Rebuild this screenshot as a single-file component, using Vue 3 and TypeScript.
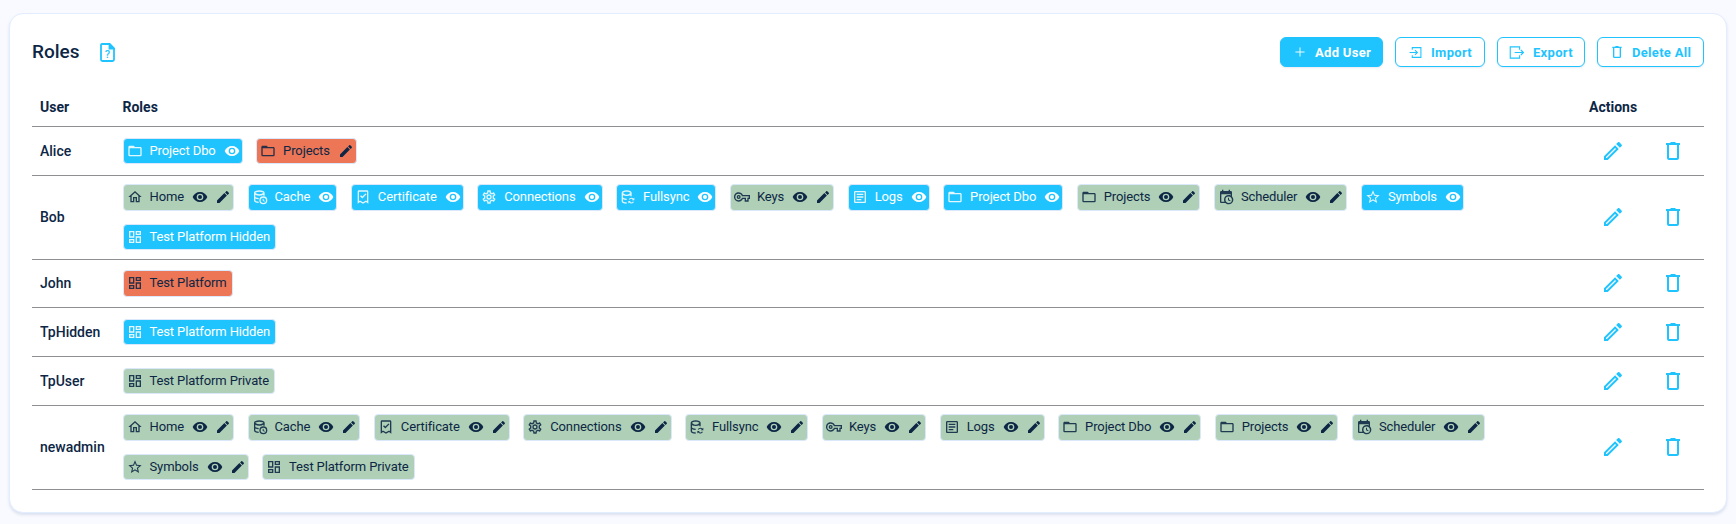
<script setup lang="ts">
const P: Record<string, string> = {
  eye: 'M12,9A3,3 0 0,0 9,12A3,3 0 0,0 12,15A3,3 0 0,0 15,12A3,3 0 0,0 12,9M12,17A5,5 0 0,1 7,12A5,5 0 0,1 12,7A5,5 0 0,1 17,12A5,5 0 0,1 12,17M12,4.5C7,4.5 2.73,7.61 1,12C2.73,16.39 7,19.5 12,19.5C17,19.5 21.27,16.39 23,12C21.27,7.61 17,4.5 12,4.5Z',
  pencil: 'M20.71,7.04C21.1,6.65 21.1,6 20.71,5.63L18.37,3.29C18,2.9 17.35,2.9 16.96,3.29L15.12,5.12L18.87,8.87M3,17.25V21H6.75L17.81,9.93L14.06,6.18L3,17.25Z',
  pencilOutline: 'M14.06,9L15,9.94L5.92,19H5V18.08L14.06,9M17.66,3C17.41,3 17.15,3.1 16.96,3.29L15.13,5.12L18.88,8.87L20.71,7.04C21.1,6.65 21.1,6 20.71,5.63L18.37,3.29C18.17,3.09 17.92,3 17.66,3M14.06,6.19L3,17.25V21H6.75L17.81,9.94L14.06,6.19Z',
  trash: 'M9.5,3V4H5V6H6V19A2,2 0 0,0 8,21H16A2,2 0 0,0 18,19V6H19V4H14.5V3H9.5M8,6H16V19H8V6Z',
  folder: 'M20,18H4V8H20M20,6H12L10,4H4C2.89,4 2,4.89 2,6V18A2,2 0 0,0 4,20H20A2,2 0 0,0 22,18V8C22,6.89 21.1,6 20,6Z',
  home: 'M12 5.69L17 10.19V18H15V12H9V18H7V10.19L12 5.69M12 3L2 12H5V20H11V14H13V20H19V12H22Z',
  grid: 'M19,5V7H15V5H19M9,5V11H5V5H9M19,13V19H15V13H19M9,17V19H5V17H9M21,3H13V9H21V3M11,3H3V13H11V3M21,11H13V21H21V11M11,15H3V21H11V15Z',
  star: 'M12,15.39L8.24,17.66L9.23,13.38L5.91,10.5L10.29,10.13L12,6.09L13.71,10.13L18.09,10.5L14.77,13.38L15.76,17.66M22,9.24L14.81,8.63L12,2L9.19,8.63L2,9.24L7.45,13.97L5.82,21L12,17.27L18.18,21L16.54,13.97L22,9.24Z',
  cog: 'M12,8A4,4 0 0,1 16,12A4,4 0 0,1 12,16A4,4 0 0,1 8,12A4,4 0 0,1 12,8M12,10A2,2 0 0,0 10,12A2,2 0 0,0 12,14A2,2 0 0,0 14,12A2,2 0 0,0 12,10M10,22C9.75,22 9.54,21.82 9.5,21.58L9.13,18.93C8.5,18.68 7.96,18.34 7.44,17.94L4.95,18.95C4.73,19.03 4.46,18.95 4.34,18.73L2.34,15.27C2.21,15.05 2.27,14.78 2.46,14.63L4.57,12.97L4.5,12L4.57,11L2.46,9.37C2.27,9.22 2.21,8.95 2.34,8.73L4.34,5.27C4.46,5.05 4.73,4.96 4.95,5.05L7.44,6.05C7.96,5.66 8.5,5.32 9.13,5.07L9.5,2.42C9.54,2.18 9.75,2 10,2H14C14.25,2 14.46,2.18 14.5,2.42L14.87,5.07C15.5,5.32 16.04,5.66 16.56,6.05L19.05,5.05C19.27,4.96 19.54,5.05 19.66,5.27L21.66,8.73C21.79,8.95 21.73,9.22 21.54,9.37L19.43,11L19.5,12L19.43,13L21.54,14.63C21.73,14.78 21.79,15.05 21.66,15.27L19.66,18.73C19.54,18.95 19.27,19.04 19.05,18.95L16.56,17.95C16.04,18.34 15.5,18.68 14.87,18.93L14.5,21.58C14.46,21.82 14.25,22 14,22H10M11.25,4L10.88,6.61C9.68,6.86 8.62,7.5 7.85,8.39L5.44,7.35L4.69,8.65L6.8,10.2C6.4,11.37 6.4,12.64 6.8,13.8L4.68,15.36L5.43,16.66L7.86,15.62C8.63,16.5 9.68,17.14 10.87,17.38L11.24,20H12.76L13.13,17.39C14.32,17.14 15.37,16.5 16.14,15.62L18.57,16.66L19.32,15.36L17.2,13.81C17.6,12.64 17.6,11.37 17.2,10.2L19.31,8.65L18.56,7.35L16.15,8.39C15.38,7.5 14.32,6.86 13.12,6.62L12.75,4H11.25Z',
  key: 'M22,19H16V15H13.32C12.18,17.42 9.72,19 7,19C3.14,19 0,15.86 0,12C0,8.14 3.14,5 7,5C9.72,5 12.17,6.58 13.32,9H24V15H22V19M18,17H20V13H22V11H11.94L11.71,10.33C11,8.34 9.11,7 7,7A5,5 0 0,0 2,12A5,5 0 0,0 7,17C9.11,17 11,15.66 11.71,13.67L11.94,13H18V17M7,15A3,3 0 0,1 4,12A3,3 0 0,1 7,9A3,3 0 0,1 10,12A3,3 0 0,1 7,15M7,11A1,1 0 0,0 6,12A1,1 0 0,0 7,13A1,1 0 0,0 8,12A1,1 0 0,0 7,11Z',
  logs: 'M5,3C3.89,3 3,3.89 3,5V19C3,20.11 3.89,21 5,21H19C20.11,21 21,20.11 21,19V5C21,3.89 20.11,3 19,3H5M5,5H19V19H5V5M7,7V9H17V7H7M7,11V13H17V11H7M7,15V17H14V15H7Z',
  sched: 'M15,13H16.5V15.82L18.94,17.23L18.19,18.53L15,16.69V13M19,8H5V19H9.67C9.24,18.09 9,17.07 9,16A7,7 0 0,1 16,9C17.07,9 18.09,9.24 19,9.67V8M5,21C3.89,21 3,20.1 3,19V5C3,3.89 3.89,3 5,3H6V1H8V3H16V1H18V3H19A2,2 0 0,1 21,5V11.1C22.24,12.36 23,14.09 23,16A7,7 0 0,1 16,23C14.09,23 12.36,22.24 11.1,21H5M16,11.15A4.85,4.85 0 0,0 11.15,16C11.15,18.68 13.32,20.85 16,20.85A4.85,4.85 0 0,0 20.85,16C20.85,13.32 18.68,11.15 16,11.15Z',
  cert: 'M6,2H18A2,2 0 0,1 20,4V22L16.5,19.5L12,22L7.5,19.5L4,22V4A2,2 0 0,1 6,2M6,4V18.2L7.4,17.2L12,19.7L16.6,17.2L18,18.2V4H6M15.8,6.6L17.2,8L11,14.2L7.6,10.8L9,9.4L11,11.4L15.8,6.6Z',
  cache: 'M11,2C6.6,2 3,3.6 3,5.8V17.2C3,19.2 6,20.7 10,21V19C6.9,18.8 5,17.8 5,17.2V14.3C6.3,15 8,15.4 10,15.5V13.5C7,13.3 5,12.3 5,11.6V8.7C6.5,9.5 8.6,10 11,10C13.4,10 15.5,9.5 17,8.7V10H19V5.8C19,3.6 15.4,2 11,2M11,4C14.9,4 17,5.3 17,5.8C17,6.3 14.9,8 11,8C7.1,8 5,6.3 5,5.8C5,5.3 7.1,4 11,4M17,11A6,6 0 0,0 11,17A6,6 0 0,0 17,23A6,6 0 0,0 23,17A6,6 0 0,0 17,11M17,13A4,4 0 0,1 21,17A4,4 0 0,1 17,21A4,4 0 0,1 13,17A4,4 0 0,1 17,13M16,14.5V17.5L18.6,19L19.3,17.9L17.4,16.8V14.5H16Z',
  sync: 'M10,2C5.8,2 2.5,3.6 2.5,5.8V18.2C2.5,20.3 5.6,21.8 10,22V20C6.4,19.8 4.5,18.8 4.5,18.2V15.2C5.9,16 7.8,16.4 10,16.5V14.5C6.9,14.3 4.5,13.4 4.5,12.4V9.5C6,10.2 7.9,10.6 10,10.6C12.1,10.6 14,10.2 15.5,9.5V11H17.5V5.8C17.5,3.6 14.2,2 10,2M10,4C13.3,4 15.5,5.1 15.5,5.8C15.5,6.5 13.3,8.6 10,8.6C6.7,8.6 4.5,6.5 4.5,5.8C4.5,5.1 6.7,4 10,4M17,13A4.5,4.5 0 0,0 13.1,15.3L14.5,16.1A3,3 0 0,1 17,14.6A3,3 0 0,1 19.1,15.5L17.8,16.8H21.5V13.1L20.2,14.4A4.5,4.5 0 0,0 17,13M12.5,18V21.7L13.8,20.4A4.5,4.5 0 0,0 20.9,19.5L19.5,18.7A3,3 0 0,1 17,20.2A3,3 0 0,1 14.9,19.3L16.2,18H12.5Z',
}

type Perm = 'view' | 'edit' | 'both' | 'hidden' | 'public' | 'private'
type Chip = { name: string; icon: string; perm: Perm }
const c = (name: string, icon: string, perm: Perm): Chip => ({ name, icon, perm })
const all = (n: string, i: string) => c(n, i, 'both')

const users: { name: string; chips: Chip[] }[] = [
  { name: 'Alice', chips: [c('Project Dbo', 'folder', 'view'), c('Projects', 'folder', 'edit')] },
  {
    name: 'Bob',
    chips: [
      all('Home', 'home'), c('Cache', 'cache', 'view'), c('Certificate', 'cert', 'view'), c('Connections', 'cog', 'view'),
      c('Fullsync', 'sync', 'view'), all('Keys', 'key'), c('Logs', 'logs', 'view'), c('Project Dbo', 'folder', 'view'),
      all('Projects', 'folder'), all('Scheduler', 'sched'), c('Symbols', 'star', 'view'), c('Test Platform Hidden', 'grid', 'hidden'),
    ],
  },
  { name: 'John', chips: [c('Test Platform', 'grid', 'public')] },
  { name: 'TpHidden', chips: [c('Test Platform Hidden', 'grid', 'hidden')] },
  { name: 'TpUser', chips: [c('Test Platform Private', 'grid', 'private')] },
  {
    name: 'newadmin',
    chips: [
      all('Home', 'home'), all('Cache', 'cache'), all('Certificate', 'cert'), all('Connections', 'cog'),
      all('Fullsync', 'sync'), all('Keys', 'key'), all('Logs', 'logs'), all('Project Dbo', 'folder'),
      all('Projects', 'folder'), all('Scheduler', 'sched'), all('Symbols', 'star'), c('Test Platform Private', 'grid', 'private'),
    ],
  },
]

const tone = (p: Perm) => (p === 'both' || p === 'private' ? 'green' : p === 'edit' || p === 'public' ? 'red' : 'blue')
const showEye = (p: Perm) => p === 'view' || p === 'both'
const showPen = (p: Perm) => p === 'edit' || p === 'both'
</script>

<template>
  <div class="page">
    <section class="card">
      <header class="head">
        <div class="title-wrap">
          <h1 class="title">Roles</h1>
          <svg class="doc" viewBox="0 0 15 19" width="15" height="19" fill="none" stroke="#1fc4ff" stroke-width="1.8">
            <path d="M2 1H9.5L14 5.5V16.6A1.4 1.4 0 0 1 12.6 18H2.4A1.4 1.4 0 0 1 1 16.6V2A1 1 0 0 1 2 1Z" />
            <path d="M9.5 1V5.5H14Z" fill="#1fc4ff" />
            <text x="7.5" y="15" text-anchor="middle" class="doc-q">?</text>
          </svg>
        </div>
        <div class="btns">
          <button class="btn solid">
            <svg viewBox="0 0 24 24" width="10" height="10" stroke="#fff" stroke-width="2.2" fill="none"><path d="M12 1V23M1 12H23" /></svg>
            Add User
          </button>
          <button class="btn import">
            <svg viewBox="0 0 24 24" width="13" height="13" stroke="#1fc4ff" stroke-width="2" fill="none"><path d="M1 12H15M11 7.5L15.5 12L11 16.5M6 7V3H22V21H6V17" /></svg>
            Import
          </button>
          <button class="btn export">
            <svg viewBox="0 0 24 24" width="15" height="15" stroke="#1fc4ff" stroke-width="1.8" fill="none"><path d="M17 7.5V3H2V21H17V16.5M9 12H23M19 8L23 12L19 16" /></svg>
            Export
          </button>
          <button class="btn del">
            <svg viewBox="0 0 24 24" width="16" height="16" fill="#1fc4ff"><path :d="P.trash" /></svg>
            Delete All
          </button>
        </div>
      </header>

      <div class="row thead">
        <div class="c-user">User</div>
        <div class="c-roles">Roles</div>
        <div class="c-actions">Actions</div>
      </div>

      <div v-for="u in users" :key="u.name" class="row">
        <div class="c-user name">{{ u.name }}</div>
        <div class="c-roles chips">
          <span v-for="ch in u.chips" :key="ch.name" class="chip" :class="tone(ch.perm)">
            <svg class="ic main" viewBox="0 0 24 24"><path :d="P[ch.icon]" /></svg>
            <span class="lbl">{{ ch.name }}</span>
            <svg v-if="showEye(ch.perm)" class="ic" viewBox="0 0 24 24"><path :d="P.eye" /></svg>
            <svg v-if="showPen(ch.perm)" class="ic" :class="{ pen: showEye(ch.perm) }" viewBox="0 0 24 24"><path :d="P.pencil" /></svg>
          </span>
        </div>
        <div class="c-actions acts">
          <svg class="act" viewBox="0 0 24 24"><path :d="P.pencilOutline" /></svg>
          <svg class="act" viewBox="0 0 24 24"><path :d="P.trash" /></svg>
        </div>
      </div>
    </section>
  </div>
</template>

<style>
html, body { margin: 0; background: #f8faff; }
</style>

<style scoped>
.page {
  width: 1736px;
  height: 524px;
  box-sizing: border-box;
  padding: 13px 9px 11px 9px;
  font-family: Roboto, "Noto Sans", sans-serif;
  color: #0d2645;
}
.card {
  box-sizing: border-box;
  height: 500px;
  background: #fff;
  border: 1px solid #e2edff;
  border-radius: 14px;
  box-shadow: 0 2px 3px rgba(60, 80, 140, 0.14);
  padding: 23px 22px 0 22px;
}
.head { display: flex; justify-content: space-between; align-items: flex-start; height: 59px; }
.title-wrap { display: flex; align-items: center; height: 30px; }
.title { margin: 0; width: 68px; font-size: 19px; font-weight: 500; line-height: 30px; }
.doc-q { font: 500 11px Roboto, sans-serif; fill: #1fc4ff; stroke: none; }
.btns { display: flex; gap: 12px; }
.btn {
  display: inline-flex;
  align-items: center;
  gap: 9px;
  height: 30px;
  box-sizing: border-box;
  padding: 0 0 0 13px;
  background: #fff;
  color: #1fc4ff;
  border: 1px solid #1fc4ff;
  border-radius: 6px;
  font: 700 13px Roboto, sans-serif;
  letter-spacing: 0.3px;
  white-space: nowrap;
  box-shadow: 0 1px 2px rgba(60, 80, 140, 0.12);
}
.btn.solid { background: #1fc4ff; color: #fff; width: 103px; padding-left: 14px; gap: 10px; }
.btn.import { width: 90px; }
.btn.export { width: 88px; padding-left: 11px; }
.btn.del { width: 107px; padding-left: 11px; gap: 7px; }
.row {
  display: flex;
  align-items: center;
  min-height: 48.67px;
  box-sizing: border-box;
  border-bottom: 1px solid #8e8e93;
}
.thead { min-height: 0; height: 31px; font-weight: 700; font-size: 14px; align-items: flex-start; line-height: 22px; }
.c-user { flex: none; width: 82.5px; padding-left: 8px; }
.c-roles { flex: 1; min-width: 0; }
.c-actions { flex: none; width: 115px; }
.name { font-size: 14px; font-weight: 500; }
.chips { display: flex; flex-wrap: wrap; gap: 13px 13.5px; padding: 8.5px 0; }
.chip {
  display: inline-flex;
  align-items: center;
  height: 26.5px;
  box-sizing: border-box;
  padding: 0 2px 0 3px;
  border: 1px solid #dbe8fb;
  border-radius: 4px;
  font-size: 13px;
  letter-spacing: -0.12px;
  line-height: 1;
}
.chip.blue { background: #1fc4ff; color: #fff; fill: #fff; }
.chip.green { background: #afd0b6; color: #0d2645; fill: #0d2645; }
.chip.red { background: #ec7656; color: #0d2645; fill: #0d2645; }
.ic { width: 16px; height: 16px; flex: none; }
.ic.main { opacity: 0.88; }
.lbl { margin: 0 8px 1px 7px; white-space: nowrap; }
.lbl:last-child { margin-right: 3px; }
.pen { margin-left: 7px; }
.acts { display: flex; align-items: center; gap: 36px; padding-left: 12px; box-sizing: border-box; }
.act { width: 24px; height: 24px; fill: #1fc4ff; }
</style>
